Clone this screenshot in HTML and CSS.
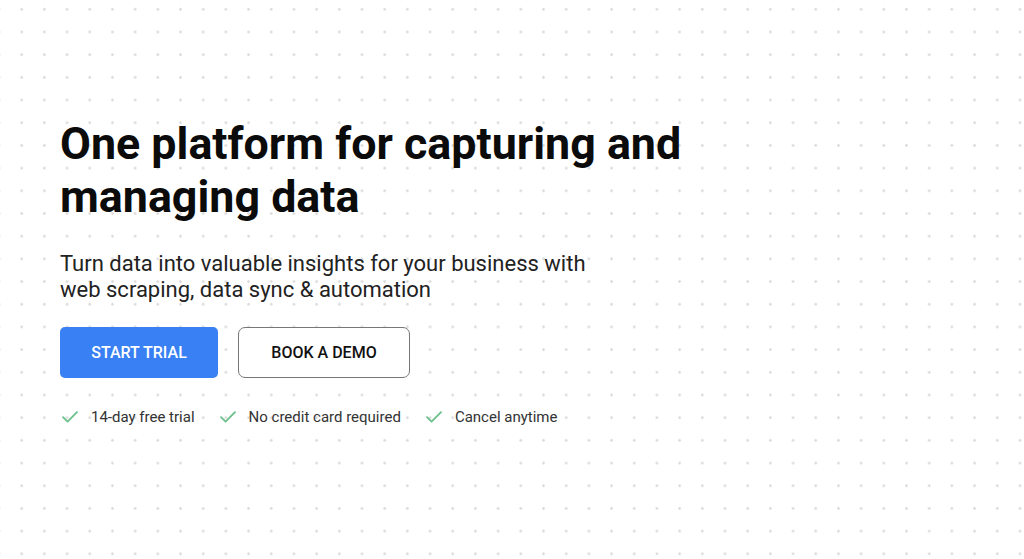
FILE: index.html
```html
<!DOCTYPE html>
<html lang="en">
<head>
<meta charset="utf-8">
<title>One platform for capturing and managing data</title>
<link rel="stylesheet" href="styles.css">
</head>
<body>
<main class="hero">
  <h1 class="hero-title">One platform for capturing and<br>managing data</h1>
  <p class="hero-sub">Turn data into valuable insights for your business with<br>web scraping, data sync &amp; automation</p>
  <div class="actions">
    <a class="btn btn-primary" href="#">START TRIAL</a>
    <a class="btn btn-outline" href="#">BOOK A DEMO</a>
  </div>
  <ul class="perks">
    <li class="perk"><svg class="check" viewBox="0 0 16 12" width="16" height="12"><path d="M1 6.2 L5.6 10.6 L15 1.2" fill="none" stroke="#6bbf8a" stroke-width="1.8" stroke-linecap="round" stroke-linejoin="round"/></svg><span>14-day free trial</span></li>
    <li class="perk"><svg class="check" viewBox="0 0 16 12" width="16" height="12"><path d="M1 6.2 L5.6 10.6 L15 1.2" fill="none" stroke="#6bbf8a" stroke-width="1.8" stroke-linecap="round" stroke-linejoin="round"/></svg><span>No credit card required</span></li>
    <li class="perk"><svg class="check" viewBox="0 0 16 12" width="16" height="12"><path d="M1 6.2 L5.6 10.6 L15 1.2" fill="none" stroke="#6bbf8a" stroke-width="1.8" stroke-linecap="round" stroke-linejoin="round"/></svg><span>Cancel anytime</span></li>
  </ul>
</main>
</body>
</html>
```
FILE: styles.css
```css
html, body {
  margin: 0;
  padding: 0;
}
body {
  width: 1024px;
  height: 559px;
  overflow: hidden;
  background-color: #ffffff;
  background-image: radial-gradient(circle at center, #dcdcdc 0, #dcdcdc 1px, rgba(220,220,220,0) 1.6px);
  background-size: 22.7px 22.7px;
  background-position: 10.35px -2.05px;
  font-family: Roboto, "Liberation Sans", sans-serif;
  color: #111;
}
.hero {
  padding: 117px 0 0 60px;
  display: flex;
  flex-direction: column;
  align-items: flex-start;
}
.hero-title {
  margin: 0;
  font-size: 44.8px;
  font-weight: 700;
  line-height: 53px;
  letter-spacing: 0;
  color: #0b0b0b;
}
.hero-sub {
  margin: 28px 0 0 0;
  font-size: 22px;
  line-height: 26px;
  font-weight: 400;
  color: #222;
  letter-spacing: 0;
}
.actions {
  display: flex;
  gap: 20px;
  margin-top: 24px;
}
.btn {
  display: flex;
  align-items: center;
  justify-content: center;
  height: 51px;
  box-sizing: border-box;
  text-decoration: none;
  font-size: 16px;
  font-weight: 500;
}
.btn-primary {
  width: 158px;
  background: #3880f3;
  color: #fff;
  border-radius: 5px;
}
.btn-outline {
  width: 172px;
  background: #fff;
  color: #111;
  border: 1px solid #777;
  border-radius: 7px;
}
.perks {
  list-style: none;
  margin: 30px 0 0 2px;
  padding: 0;
  display: flex;
  gap: 25px;
}
.perk {
  display: flex;
  align-items: center;
  gap: 13px;
  font-size: 15px;
  color: #333;
}
.check {
  display: block;
}
```
